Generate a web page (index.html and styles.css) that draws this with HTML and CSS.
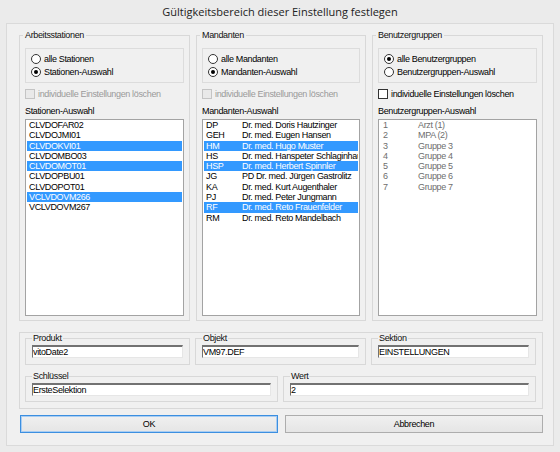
FILE: index.html
```html
<!DOCTYPE html>
<html lang="de">
<head>
<meta charset="utf-8">
<title>Gültigkeitsbereich</title>
<link rel="stylesheet" href="styles.css">
</head>
<body>
<div class="window">
  <div class="title">Gültigkeitsbereich dieser Einstellung festlegen</div>
  <div class="panel">
    <div class="groups">
      <fieldset class="group">
        <legend>Arbeitsstationen</legend>
        <div class="radiobox">
          <div class="radio"><span class="dot"></span>alle Stationen</div>
          <div class="radio checked"><span class="dot"></span>Stationen-Auswahl</div>
        </div>
        <div class="check disabled"><span class="box"></span>individuelle Einstellungen löschen</div>
        <div class="listlabel">Stationen-Auswahl</div>
        <div class="listbox">
          <div class="item">CLVDOFAR02</div>
          <div class="item">CLVDOJMI01</div>
          <div class="item sel">CLVDOKVI01</div>
          <div class="item">CLVDOMBO03</div>
          <div class="item sel">CLVDOMOT01</div>
          <div class="item">CLVDOPBU01</div>
          <div class="item">CLVDOPOT01</div>
          <div class="item sel">VCLVDOVM266</div>
          <div class="item">VCLVDOVM267</div>
        </div>
      </fieldset>
      <fieldset class="group">
        <legend>Mandanten</legend>
        <div class="radiobox">
          <div class="radio"><span class="dot"></span>alle Mandanten</div>
          <div class="radio checked"><span class="dot"></span>Mandanten-Auswahl</div>
        </div>
        <div class="check disabled"><span class="box"></span>individuelle Einstellungen löschen</div>
        <div class="listlabel">Mandanten-Auswahl</div>
        <div class="listbox">
          <div class="item"><span class="c1">DP</span><span>Dr. med. Doris Hautzinger</span></div>
          <div class="item"><span class="c1">GEH</span><span>Dr. med. Eugen Hansen</span></div>
          <div class="item sel"><span class="c1">HM</span><span>Dr. med. Hugo Muster</span></div>
          <div class="item"><span class="c1">HS</span><span>Dr. med. Hanspeter Schlaginhaufen</span></div>
          <div class="item sel"><span class="c1">HSP</span><span>Dr. med. Herbert Spinnler</span></div>
          <div class="item"><span class="c1">JG</span><span>PD Dr. med. Jürgen Gastrolitz</span></div>
          <div class="item"><span class="c1">KA</span><span>Dr. med. Kurt Augenthaler</span></div>
          <div class="item"><span class="c1">PJ</span><span>Dr. med. Peter Jungmann</span></div>
          <div class="item sel"><span class="c1">RF</span><span>Dr. med. Reto Frauenfelder</span></div>
          <div class="item"><span class="c1">RM</span><span>Dr. med. Reto Mandelbach</span></div>
        </div>
      </fieldset>
      <fieldset class="group">
        <legend>Benutzergruppen</legend>
        <div class="radiobox">
          <div class="radio checked"><span class="dot"></span>alle Benutzergruppen</div>
          <div class="radio"><span class="dot"></span>Benutzergruppen-Auswahl</div>
        </div>
        <div class="check"><span class="box"></span>individuelle Einstellungen löschen</div>
        <div class="listlabel">Benutzergruppen-Auswahl</div>
        <div class="listbox grey">
          <div class="item"><span class="c1">1</span><span>Arzt (1)</span></div>
          <div class="item"><span class="c1">2</span><span>MPA (2)</span></div>
          <div class="item"><span class="c1">3</span><span>Gruppe 3</span></div>
          <div class="item"><span class="c1">4</span><span>Gruppe 4</span></div>
          <div class="item"><span class="c1">5</span><span>Gruppe 5</span></div>
          <div class="item"><span class="c1">6</span><span>Gruppe 6</span></div>
          <div class="item"><span class="c1">7</span><span>Gruppe 7</span></div>
        </div>
      </fieldset>
    </div>

    <div class="fields">
      <div class="fieldrow three">
        <fieldset class="field"><legend>Produkt</legend><div class="input">vitoDate2</div></fieldset>
        <fieldset class="field"><legend>Objekt</legend><div class="input">VM97.DEF</div></fieldset>
        <fieldset class="field"><legend>Sektion</legend><div class="input">EINSTELLUNGEN</div></fieldset>
      </div>
      <div class="fieldrow two">
        <fieldset class="field"><legend>Schlüssel</legend><div class="input">ErsteSelektion</div></fieldset>
        <fieldset class="field"><legend>Wert</legend><div class="input">2</div></fieldset>
      </div>
    </div>

    <div class="buttons">
      <div class="btn default">OK</div>
      <div class="btn">Abbrechen</div>
    </div>
  </div>
</div>
</body>
</html>
```

FILE: styles.css
```css
html, body {
  margin: 0;
  padding: 0;
}
body {
  width: 560px;
  height: 452px;
  background: #ebebeb;
  font-family: "Liberation Sans", Arial, sans-serif;
  font-size: 9px;
  letter-spacing: -0.35px;
  color: #000;
  overflow: hidden;
}
.window {
  width: 560px;
  height: 452px;
  box-sizing: border-box;
  padding: 0 6px 6px 6px;
  display: flex;
  flex-direction: column;
}
.title {
  height: 23px;
  line-height: 23px;
  text-align: center;
  font-family: "Open Sans", "Noto Sans", sans-serif;
  font-size: 11px;
  letter-spacing: 0;
  color: #222;
}
.panel {
  border: 1px solid #dadada;
  background: #f0f0f0;
  padding: 5px 10px 12px 12px;
}
.groups {
  display: grid;
  grid-template-columns: 171px 170px 171px;
  column-gap: 6px;
}
fieldset {
  margin: 0;
  min-width: 0;
  border: 1px solid #d8d8d8;
}
.group {
  padding: 0 5px 4px 5px;
}
.group legend {
  padding: 0 2px;
  margin-left: -2px;
  line-height: 12px;
  color: #111;
}
.radiobox {
  margin-top: 7px;
  border: 1px solid #dcdcdc;
  padding: 3px 0 4px 5px;
}
.radio {
  display: flex;
  align-items: center;
  height: 13px;
  white-space: nowrap;
}
.dot {
  position: relative;
  width: 10px;
  height: 10px;
  box-sizing: border-box;
  border: 1px solid #333;
  border-radius: 50%;
  background: #fff;
  margin-right: 3px;
  flex: none;
}
.radio.checked .dot::after {
  content: "";
  position: absolute;
  left: 2px;
  top: 2px;
  width: 4px;
  height: 4px;
  border-radius: 50%;
  background: #000;
}
.check {
  margin-top: 5px;
  display: flex;
  align-items: center;
  height: 11px;
  white-space: nowrap;
}
.box {
  width: 10px;
  height: 10px;
  box-sizing: border-box;
  border: 1px solid #333;
  background: #fff;
  margin-right: 3px;
  flex: none;
}
.check.disabled {
  color: #9a9a9a;
}
.check.disabled .box {
  border-color: #c4c4c4;
  background: #e9e9e9;
}
.listlabel {
  margin-top: 6px;
  line-height: 12px;
  white-space: nowrap;
}
.listbox {
  margin-top: 2px;
  height: 197px;
  box-sizing: border-box;
  border: 1px solid #a3a3a3;
  background: #fff;
  padding: 0 1px;
  overflow: hidden;
}
.item {
  display: flex;
  height: 10.3px;
  line-height: 10.3px;
  padding-left: 2px;
  white-space: nowrap;
  overflow: hidden;
}
.item.sel {
  background: #3399ff;
  color: #fff;
}
.c1 {
  width: 36px;
  flex: none;
}
.listbox.grey {
  color: #6e6e6e;
  padding-left: 2px;
}
.listbox.grey .c1 {
  width: 35px;
}
.fields {
  margin-top: 11px;
  border: 1px solid #d8d8d8;
  padding: 0 6px 6px 5px;
}
.fieldrow {
  display: grid;
  column-gap: 5px;
}
.fieldrow.three {
  grid-template-columns: 165px 171px 165px;
}
.fieldrow.two {
  margin-top: 6px;
  grid-template-columns: 1fr 1fr;
}
.field {
  padding: 0 6px 6px 6px;
}
.fieldrow.two .field {
  padding-bottom: 5px;
}
.field legend {
  padding: 0 1px;
  line-height: 10px;
  color: #111;
}
.input {
  margin-top: 2px;
  height: 13px;
  box-sizing: border-box;
  background: #fff;
  border-top: 2px solid #727272;
  border-left: 1px solid #727272;
  border-right: 1px solid #e6e6e6;
  border-bottom: 1px solid #e6e6e6;
  line-height: 10px;
  white-space: nowrap;
  overflow: hidden;
}
.buttons {
  margin-top: 6px;
  padding-left: 1px;
  display: grid;
  grid-template-columns: 1fr 1fr;
  column-gap: 7px;
}
.btn {
  height: 18px;
  box-sizing: border-box;
  border: 1px solid #adadad;
  background: linear-gradient(#f0f0f0, #e5e5e5);
  text-align: center;
  line-height: 16px;
}
.btn.default {
  border-color: #3c8fe0;
  box-shadow: inset 0 0 0 1px #a9cdf2;
}
```
